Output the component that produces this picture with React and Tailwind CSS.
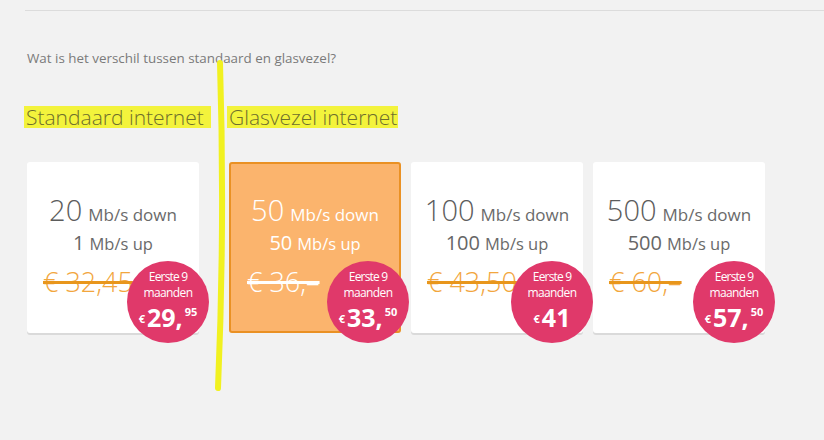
import React from "react";

const plans = [
  { down: "20", up: "1", old: "€ 32,45", price: "29,", cents: "95", active: false },
  { down: "50", up: "50", old: "€ 36,–", price: "33,", cents: "50", active: true },
  { down: "100", up: "100", old: "€ 43,50", price: "41", cents: "", active: false },
  { down: "500", up: "500", old: "€ 60,–", price: "57,", cents: "50", active: false },
];

function Badge({ price, cents, active }) {
  return (
    <div
      className={`absolute z-10 w-[82px] h-[82px] rounded-full bg-[#e0396a] text-white flex flex-col items-center pt-[8px] ${
        active ? "right-[-10px] bottom-[-12px]" : "right-[-10px] bottom-[-10px]"
      }`}
    >
      <div className="text-[12px] leading-[16px] tracking-[-0.07em]">Eerste 9</div>
      <div className="text-[12px] leading-[16px] tracking-[-0.05em]">maanden</div>
      <div className="flex items-start h-[30px] mt-[1px]">
        <span className="text-[11px] font-bold self-end mb-[5px] mr-[2px]">€</span>
        <span className="text-[25px] font-bold leading-[30px]">{price}</span>
        {cents && <span className="text-[11px] font-bold leading-[14px] mt-[3px] ml-[2px]">{cents}</span>}
      </div>
    </div>
  );
}

function Card({ plan, className }) {
  const a = plan.active;
  return (
    <div
      className={`relative w-[172px] h-[171px] rounded-[3px] ${
        a
          ? "bg-[#fbb46d] border-2 border-[#ea9124] text-white"
          : "bg-white shadow-[0_2px_0_#dadada] text-[#5c5c5c]"
      } ${className || ""}`}
    >
      <div className={`flex flex-col items-center ${a ? "pt-[28px]" : "pt-[30px]"}`}>
        <div className="h-[36px] flex items-baseline gap-[6px]">
          <span className="text-[29px] font-light leading-[36px]">{plan.down}</span>
          <span className={`text-[17px] ${a ? "text-white" : "text-[#6a6a6a]"}`}>Mb/s down</span>
        </div>
        <div className="h-[28px] flex items-baseline gap-[5px] mt-[1px]">
          <span className={`text-[20px] leading-[28px] ${a ? "text-white" : "text-[#666]"}`}>{plan.up}</span>
          <span className={`text-[16.5px] ${a ? "text-white" : "text-[#6a6a6a]"}`}>Mb/s up</span>
        </div>
      </div>
      <div className={`absolute left-[16px] ${a ? "top-[100px]" : "top-[102px]"} h-[36px] flex items-center overflow-visible`}>
        <span
          className={`text-[27px] font-light whitespace-nowrap line-through decoration-[3px] ${
            a ? "text-white decoration-white" : "text-[#f2a63e] decoration-[#e8961c]"
          }`}
        >
          {plan.old}
        </span>
      </div>
      <Badge price={plan.price} cents={plan.cents} active={a} />
    </div>
  );
}

export default function App() {
  return (
    <div
      className="relative w-[824px] h-[440px] overflow-hidden bg-[#f2f2f2]"
      style={{ fontFamily: '"Open Sans", "Liberation Sans", sans-serif' }}
    >
      <div className="h-[10px]" />
      <div className="ml-[25px] h-[1px] bg-[#dcdcdc]" />
      <div className="ml-[27px] mt-[38px] text-[13.4px] leading-[18px] text-[#7a7a7a]">
        Wat is het verschil tussen standaard en glasvezel?
      </div>
      <div className="ml-[24px] mt-[39px] flex items-center h-[22px]">
        <div className="w-[187px] h-[22px] bg-[#f3f33c] text-[#6e6e2c] text-[21px] font-light leading-[22px] pl-[2px] whitespace-nowrap">
          Standaard internet
        </div>
        <div className="ml-[16px] w-[171px] h-[22px] bg-[#f3f33c] text-[#6e6e2c] text-[21px] font-light leading-[22px] pl-[2px] whitespace-nowrap">
          Glasvezel internet
        </div>
      </div>
      <div className="ml-[27px] mt-[34px] flex items-start">
        <Card plan={plans[0]} />
        <Card plan={plans[1]} className="ml-[30px]" />
        <Card plan={plans[2]} className="ml-[10px]" />
        <Card plan={plans[3]} className="ml-[10px]" />
      </div>
      <svg className="absolute left-0 top-0 pointer-events-none z-20" width="824" height="440">
        <path d="M220 63 Q 225 225 218 388" stroke="#f1f120" strokeWidth="6" fill="none" strokeLinecap="round" />
      </svg>
    </div>
  );
}
